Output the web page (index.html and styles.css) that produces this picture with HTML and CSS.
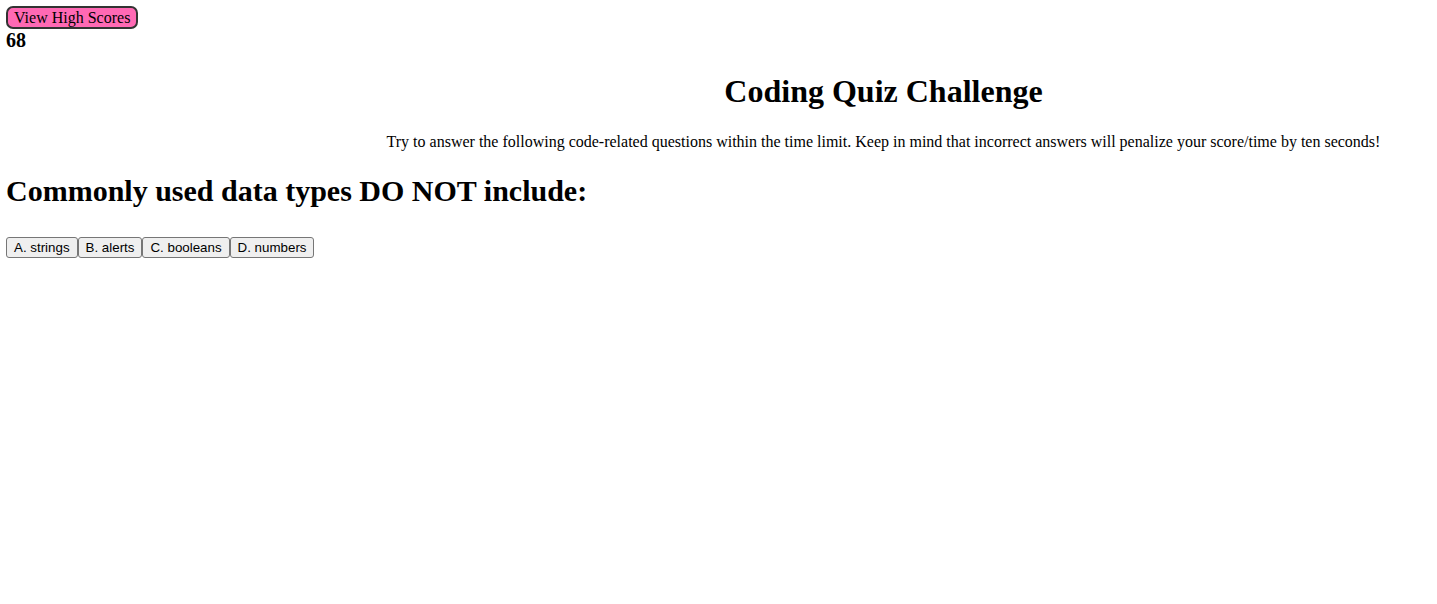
FILE: index.html
```html
<!DOCTYPE html>
<html>
<head>
<meta charset="utf-8">
<link rel="stylesheet" href="styles.css">
</head>
<body>
<header class="top">
  <button class="scores-btn">View High Scores</button>
  <div class="timer">68</div>
</header>
<section class="intro">
  <h1 class="title">Coding Quiz Challenge</h1>
  <p class="lead">Try to answer the following code-related questions within the time limit. Keep in mind that incorrect answers will penalize your score/time by ten seconds!</p>
</section>
<section class="quiz">
  <h1 class="question">Commonly used data types DO NOT include:</h1>
  <div class="answers">
    <button class="answer">A. strings</button><button class="answer">B. alerts</button><button class="answer">C. booleans</button><button class="answer">D. numbers</button>
  </div>
</section>
</body>
</html>
```
FILE: styles.css
```css
body {
  margin: 6px;
  font-family: "Liberation Serif", "Times New Roman", serif;
  color: #000;
  background: #fff;
}
.top {
  display: flex;
  flex-direction: column;
  align-items: flex-start;
}
.scores-btn {
  font-family: "Liberation Serif", "Times New Roman", serif;
  font-size: 16px;
  background: #ff69b4;
  color: #000;
  border: 2px solid #333;
  border-radius: 7px;
  padding: 0 6px;
  height: 23px;
  line-height: 19px;
}
.timer {
  font-weight: bold;
  font-size: 20px;
  line-height: 23px;
}
.intro {
  padding-left: 330px;
  text-align: center;
}
.title {
  font-size: 32px;
  margin: 21px 0 0;
}
.lead {
  font-size: 16px;
  margin: 23px 0 0;
}
.question {
  font-size: 30px;
  margin: 23px 0 29px;
}
.answers {
  display: flex;
}
.answer {
  font-family: "Liberation Sans", Arial, sans-serif;
  font-size: 13.33px;
  background: #efefef;
  border: 1px solid #767676;
  border-radius: 3px;
  padding: 1px 7px;
  height: 21px;
  color: #000;
}
```
